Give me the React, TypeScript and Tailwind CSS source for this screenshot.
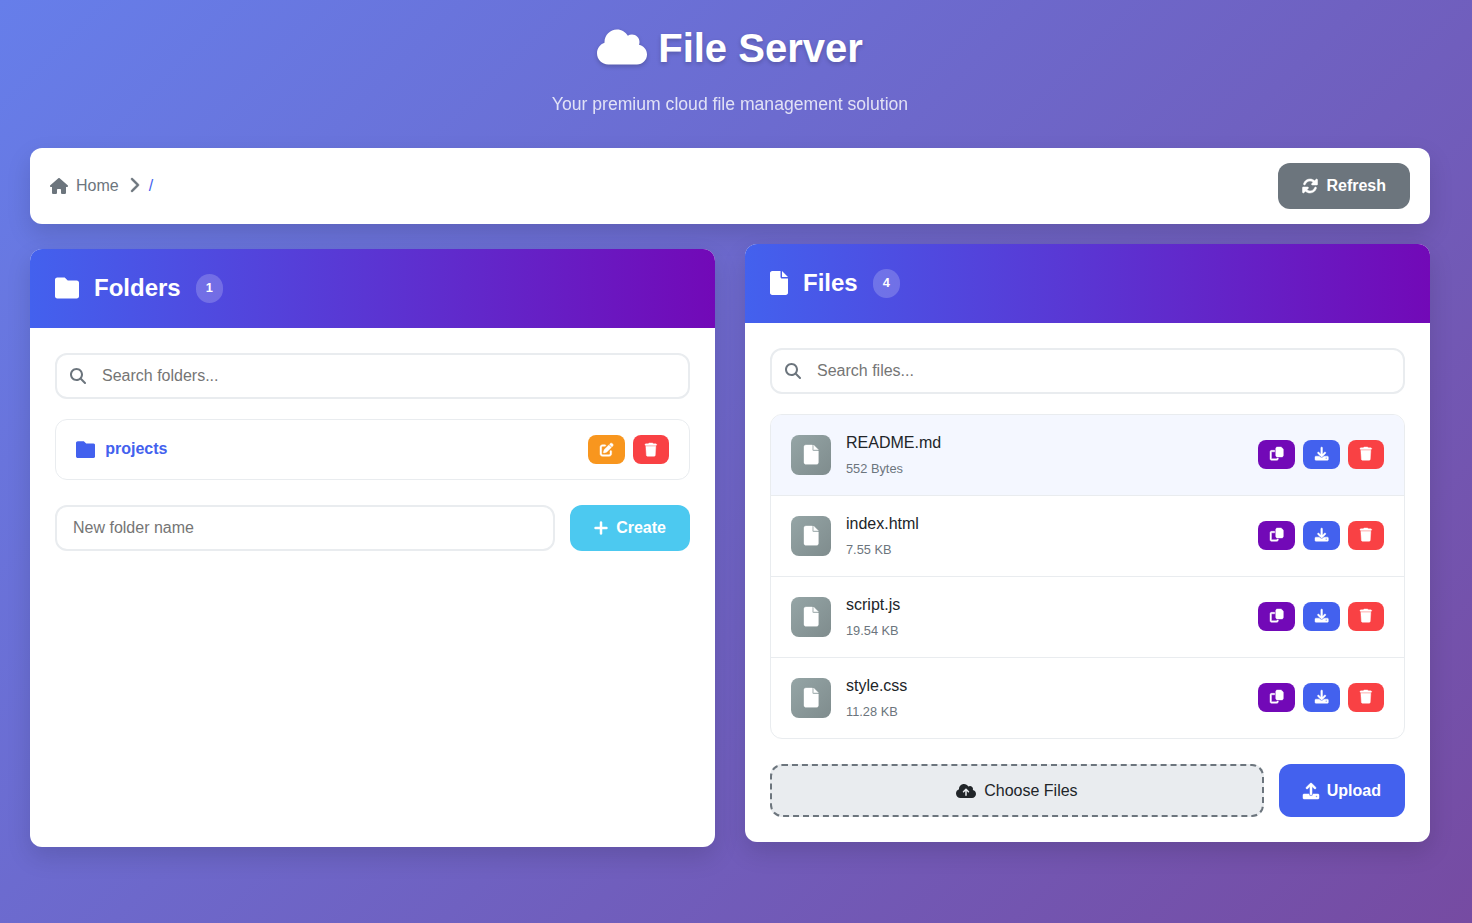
import type { ReactNode } from 'react';
import {
  FaChevronRight,
  FaCloud,
  FaCloudArrowUp,
  FaHouse,
  FaMagnifyingGlass,
  FaPenToSquare,
  FaPlus,
  FaTrash,
} from 'react-icons/fa6';

const files = [
  { name: 'README.md', size: '552 Bytes', active: true },
  { name: 'index.html', size: '7.55 KB', active: false },
  { name: 'script.js', size: '19.54 KB', active: false },
  { name: 'style.css', size: '11.28 KB', active: false },
];

const glyphs = {
  folder:
    'M512 144v288c0 26.5-21.5 48-48 48h-416C21.5 480 0 458.5 0 432v-352C0 53.5 21.5 32 48 32h160l64 64h192C490.5 96 512 117.5 512 144z',
  file:
    'M256 0v128h128L256 0zM224 128L224 0H48C21.49 0 0 21.49 0 48v416C0 490.5 21.49 512 48 512h288c26.51 0 48-21.49 48-48V160h-127.1C238.3 160 224 145.7 224 128z',
  copy:
    'M280 0h138a32 32 0 0 1 22.6 9.4l62 61.2A32 32 0 0 1 512 93.3V324c0 33-27 60-60 60H280c-33 0-60-27-60-60V60c0-33 27-60 60-60zM60 128h120v56H72c-8.8 0-16 7.2-16 16v240c0 8.8 7.2 16 16 16h176c8.8 0 16-7.2 16-16v-16h56v28c0 33-27 60-60 60H60c-33 0-60-27-60-60V188c0-33 27-60 60-60z',
  download:
    'M480 352h-133.5l-45.25 45.25C289.2 409.3 273.1 416 256 416s-33.16-6.656-45.25-18.75L165.5 352H32c-17.67 0-32 14.33-32 32v96c0 17.67 14.33 32 32 32h448c17.67 0 32-14.33 32-32v-96C512 366.3 497.7 352 480 352zM432 456c-13.2 0-24-10.8-24-24c0-13.2 10.8-24 24-24s24 10.8 24 24C456 445.2 445.2 456 432 456zM233.4 374.6C239.6 380.9 247.8 384 256 384s16.38-3.125 22.62-9.375l128-128c12.49-12.5 12.49-32.75 0-45.25c-12.5-12.5-32.76-12.5-45.25 0L288 274.8V32c0-17.67-14.33-32-32-32C238.3 0 224 14.33 224 32v242.8L150.6 201.4c-12.49-12.5-32.75-12.5-45.25 0c-12.49 12.5-12.49 32.75 0 45.25L233.4 374.6z',
  upload:
    'M105.4 182.6c12.5 12.49 32.76 12.5 45.25 .001L224 109.3V352c0 17.67 14.33 32 32 32c17.67 0 32-14.33 32-32V109.3l73.38 73.38c12.49 12.49 32.75 12.49 45.25-.001c12.49-12.49 12.49-32.75 0-45.25l-128-128C272.4 3.125 264.2 0 256 0S239.6 3.125 233.4 9.375L105.4 137.4C92.88 149.9 92.88 170.1 105.4 182.6zM480 352h-160c0 35.35-28.65 64-64 64s-64-28.65-64-64H32c-17.67 0-32 14.33-32 32v96c0 17.67 14.33 32 32 32h448c17.67 0 32-14.33 32-32v-96C512 366.3 497.7 352 480 352zM432 456c-13.2 0-24-10.8-24-24c0-13.2 10.8-24 24-24s24 10.8 24 24C456 445.2 445.2 456 432 456z',
  sync:
    'M449.9 39.96l-48.5 48.53C362.5 53.19 311.4 32 256 32C161.5 32 78.59 92.34 49.58 182.2c-5.438 16.81 3.797 34.88 20.61 40.28c16.97 5.5 34.86-3.812 40.3-20.59C130.9 138.5 189.4 96 256 96c37.96 0 73 14.18 100.2 37.8L311.1 178C295.1 194.8 306.8 223.4 330.4 224h146.9C487.7 223.7 496 215.3 496 204.9V59.04C496 34.99 466.9 22.95 449.9 39.96zM441.8 289.6c-16.94-5.438-34.88 3.812-40.3 20.59C381.1 373.5 322.6 416 256 416c-37.96 0-73-14.18-100.2-37.8L200 334C216.9 317.2 205.2 288.6 181.6 288H34.66C24.32 288.3 16 296.7 16 307.1v145.9c0 24.04 29.07 36.08 46.07 19.07l48.5-48.53C149.5 458.8 200.6 480 255.1 480c94.45 0 177.4-60.34 206.4-150.2C467.9 313 458.6 294.1 441.8 289.6z',
};

function Glyph({ name, width = 512, className = 'size-[1em]' }: { name: keyof typeof glyphs; width?: number; className?: string }) {
  return (
    <svg viewBox={`0 0 ${width} 512`} fill="currentColor" className={className} aria-hidden="true">
      <path d={glyphs[name]} />
    </svg>
  );
}

function SmallButton({ color, label, children }: { color: string; label: string; children: ReactNode }) {
  return (
    <button aria-label={label} className={`flex h-[29px] items-center rounded-lg px-3 text-[13.333px] text-white [&_svg]:overflow-visible [&_svg]:stroke-current [&_svg]:stroke-16 ${color}`}>
      {children}
    </button>
  );
}

function Card({ icon, title, count, children }: { icon: ReactNode; title: string; count: number; children: ReactNode }) {
  return (
    <section className="h-[598px] flex-1 overflow-hidden rounded-xl bg-white shadow-[0_10px_24px_rgba(0,0,0,0.13)]">
      <div className="flex h-[79px] items-center gap-[15px] bg-[linear-gradient(to_right,#4361ee,#7209b7)] px-[25px] text-2xl font-bold text-white">
        {icon}
        <h2 className="-mt-0.5">{title}</h2>
        <span className="flex h-[29px] items-center rounded-full bg-white/20 px-[10px] pb-px text-[12.8px]">{count}</span>
      </div>
      <div className="p-[25px]">{children}</div>
    </section>
  );
}

function SearchBox({ placeholder }: { placeholder: string }) {
  return (
    <label className="mb-5 flex h-[46px] items-center gap-4 rounded-xl border-2 border-[#e9ecef] pl-[13px]">
      <FaMagnifyingGlass className="size-4 text-[#6c757d]" />
      <input placeholder={placeholder} className="min-w-0 flex-1 outline-none placeholder:text-[#757575]" />
    </label>
  );
}

export default function App() {
  return (
    <div className="min-h-[923px] bg-[linear-gradient(135deg,#667eea_0%,#764ba2_100%)] pr-[42px] pl-[30px] font-['Liberation_Sans',sans-serif] text-base text-[#212529]">
      <header className="flex flex-col items-center pt-[18px] text-white">
        <h1 className="flex h-[60px] items-center gap-[11px] text-[40px] font-bold [text-shadow:0_2px_4px_rgba(0,0,0,0.2)]">
          <FaCloud className="-mt-0.5 h-10 w-[50px] drop-shadow-[0_2px_2px_rgba(0,0,0,0.2)]" />
          File Server
        </h1>
        <p className="mt-[11px] h-[30px] text-[17.6px] leading-[30px] opacity-80">Your premium cloud file management solution</p>
      </header>

      <nav className="mt-[29px] flex h-[76px] items-center justify-between rounded-xl bg-white px-5 shadow-[0_10px_24px_rgba(0,0,0,0.13)]">
        <div className="flex items-center text-[#6c757d]">
          <FaHouse className="h-4 w-[18px]" />
          <span className="ml-2">Home</span>
          <FaChevronRight className="-mt-0.5 ml-[10px] h-4 w-[10px] overflow-visible stroke-16" />
          <span className="ml-[10px] text-[#4361ee]">/</span>
        </div>
        <button className="flex h-[46px] items-center gap-2 rounded-xl bg-[#6c757d] px-6 font-bold text-white">
          <Glyph name="sync" className="size-4 overflow-visible stroke-current stroke-16" />
          Refresh
        </button>
      </nav>

      <main className="mt-5 flex gap-[30px]">
        <div className="flex flex-1 pt-[5px]">
          <Card icon={<Glyph name="folder" className="-mt-0.5 size-6" />} title="Folders" count={1}>
            <SearchBox placeholder="Search folders..." />
            <div className="mb-[25px] flex h-[61px] items-center rounded-xl border border-[#e9ecef] px-5">
              <Glyph name="folder" className="size-[19.2px] text-[#4361ee]" />
              <span className="-mt-0.5 ml-[10px] flex-1 font-bold text-[#4361ee]">projects</span>
              <div className="flex gap-2">
                <SmallButton color="bg-[#f8961e]" label="Rename"><FaPenToSquare /></SmallButton>
                <SmallButton color="bg-[#f94144]" label="Delete"><FaTrash className="h-[1em] w-[0.875em]" /></SmallButton>
              </div>
            </div>
            <div className="flex h-[46px] gap-[15px]">
              <input placeholder="New folder name" className="min-w-0 flex-1 rounded-xl border-2 border-[#e9ecef] px-4 outline-none placeholder:text-[#757575]" />
              <button className="flex items-center gap-2 rounded-xl bg-[#4cc9f0] px-6 font-bold text-white">
                <FaPlus className="-mt-px h-4 w-[14px] overflow-visible stroke-16" />
                Create
              </button>
            </div>
          </Card>
        </div>

        <div className="flex flex-1 pb-[5px]">
          <Card icon={<Glyph name="file" width={384} className="-mt-0.5 h-6 w-[18px]" />} title="Files" count={4}>
            <SearchBox placeholder="Search files..." />
            <ul className="mb-[25px] overflow-hidden rounded-xl border border-[#e9ecef]">
              {files.map((file) => (
                <li key={file.name} className={`flex h-[81px] items-center border-b border-[#e9ecef] px-5 last:h-20 last:border-b-0 ${file.active ? 'bg-[#f4f7ff]' : ''}`}>
                  <span className="flex size-10 items-center justify-center rounded-lg bg-[linear-gradient(135deg,#95a5a6,#7f8c8d)] text-white">
                    <Glyph name="file" width={384} className="h-[19.2px] w-[14.4px] overflow-visible stroke-current stroke-10" />
                  </span>
                  <div className="mt-0.5 ml-[15px] flex-1">
                    <div className="leading-[26px]">{file.name}</div>
                    <div className="text-[12.8px] leading-[26px] text-[#6c757d]">{file.size}</div>
                  </div>
                  <div className="-mt-0.5 flex gap-2">
                    <SmallButton color="bg-[#7209b7]" label="Copy"><Glyph name="copy" /></SmallButton>
                    <SmallButton color="bg-[#4361ee]" label="Download"><Glyph name="download" /></SmallButton>
                    <SmallButton color="bg-[#f94144]" label="Delete"><FaTrash className="h-[1em] w-[0.875em]" /></SmallButton>
                  </div>
                </li>
              ))}
            </ul>
            <div className="flex h-[53px] gap-[15px]">
              <button className="flex flex-1 items-center justify-center gap-2 rounded-xl border-2 border-dashed border-[#6c757d] bg-[#e9ecef]">
                <FaCloudArrowUp className="h-4 w-5" />
                Choose Files
              </button>
              <button className="flex items-center gap-2 rounded-xl bg-[#4361ee] px-6 font-bold text-white">
                <Glyph name="upload" className="size-4 overflow-visible stroke-current stroke-16" />
                Upload
              </button>
            </div>
          </Card>
        </div>
      </main>
    </div>
  );
}
